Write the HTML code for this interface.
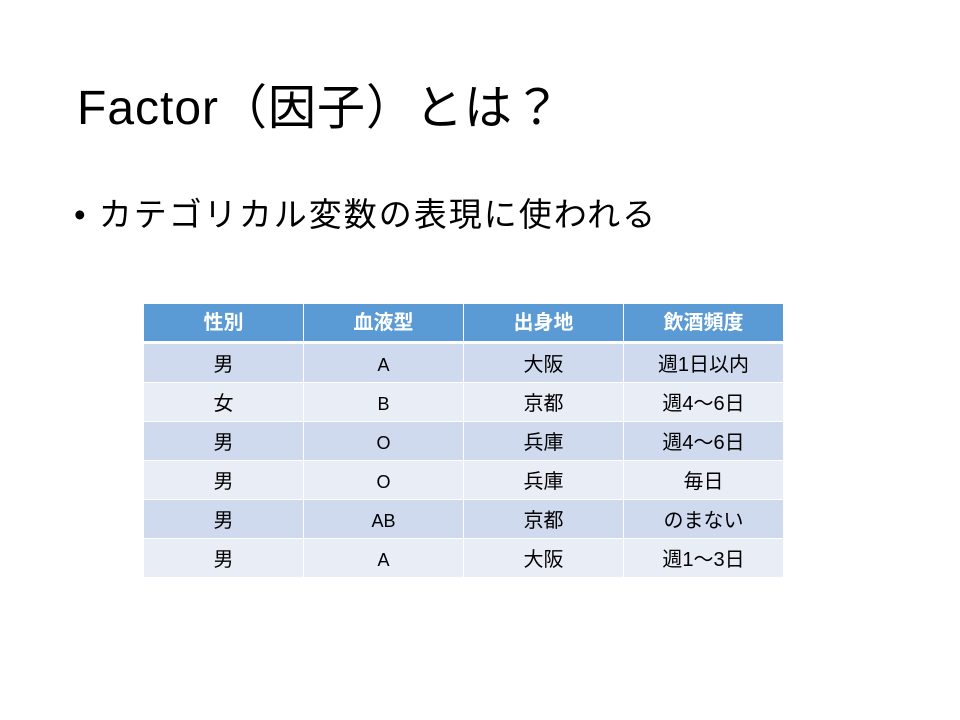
<!DOCTYPE html>
<html><head><meta charset="utf-8"><style>
body{margin:0;width:960px;height:720px;background:#fff;position:relative;overflow:hidden;font-family:"Liberation Sans","Noto Sans CJK JP",sans-serif;color:#000}
.t{position:absolute;left:77px;top:74px;font-size:48px;line-height:70px;white-space:nowrap;letter-spacing:1px}
.b{position:absolute;left:74px;top:191px;font-size:33px;line-height:48px;white-space:nowrap;letter-spacing:2px}
table{position:absolute;left:144px;top:304px;border-collapse:collapse;font-size:20px;line-height:24px}
td,th{width:159px;text-align:center;padding:0;border:1px solid #fff;vertical-align:middle}
th{background:#5B9BD5;color:#fff;font-weight:bold;height:37px;border-bottom:3px solid #fff}
td{height:34px;padding-top:4px}
td.e{font-size:18px}
tr.d td{background:#CFDAEE}
tr.l td{background:#E9EDF6}
tr:first-child th{border-top:none}
td:first-child,th:first-child{border-left:none}
td:last-child,th:last-child{border-right:none}
</style></head><body>
<div class="t">Factor（因子）とは？</div>
<div class="b">• カテゴリカル変数の表現に使われる</div>
<table>
<tr><th>性別</th><th>血液型</th><th>出身地</th><th>飲酒頻度</th></tr>
<tr class="d"><td>男</td><td class="e">A</td><td>大阪</td><td>週1日以内</td></tr>
<tr class="l"><td>女</td><td class="e">B</td><td>京都</td><td>週4～6日</td></tr>
<tr class="d"><td>男</td><td class="e">O</td><td>兵庫</td><td>週4～6日</td></tr>
<tr class="l"><td>男</td><td class="e">O</td><td>兵庫</td><td>毎日</td></tr>
<tr class="d"><td>男</td><td class="e">AB</td><td>京都</td><td>のまない</td></tr>
<tr class="l"><td>男</td><td class="e">A</td><td>大阪</td><td>週1～3日</td></tr>
</table>
</body></html>
